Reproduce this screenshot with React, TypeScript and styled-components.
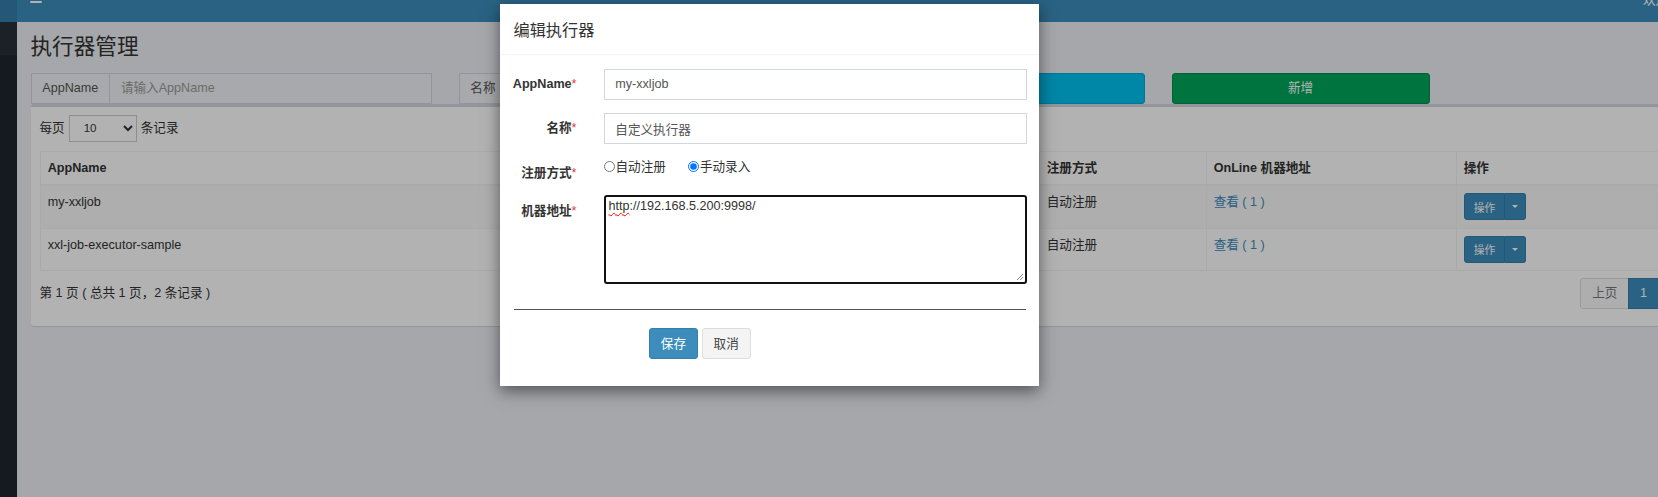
import React from "react";
import styled, { createGlobalStyle } from "styled-components";

const GlobalStyle = createGlobalStyle`
  html, body {
    margin: 0;
    padding: 0;
  }
  body {
    font-family: "Liberation Sans", "Noto Sans CJK SC", sans-serif;
    font-size: 12.6px;
    line-height: 18px;
    color: #333;
    background: #ecf0f5;
    overflow: hidden;
  }
  * {
    box-sizing: border-box;
  }
`;

const Page = styled.div`
  position: relative;
  display: flex;
  width: 1658px;
  height: 497px;
  overflow: hidden;
  background: #ecf0f5;
`;

const Sidebar = styled.aside`
  flex: none;
  width: 17px;
  display: flex;
  flex-direction: column;
  background: #1e282e;
`;

const SidebarLogo = styled.div`
  height: 22px;
  background: #367fa9;
`;

const SidebarPanel = styled.div`
  height: 33px;
  background: #283238;
`;

const Main = styled.div`
  flex: none;
  width: 1712px;
  display: flex;
  flex-direction: column;
`;

const TopBar = styled.header`
  height: 22px;
  display: flex;
  align-items: flex-end;
  justify-content: space-between;
  padding: 0 23px 0 13px;
  background: #3c8dbc;
  color: #fff;
  overflow: hidden;
`;

const Hamburger = styled.span`
  display: flex;
  flex-direction: column;
  gap: 2.7px;
  width: 12px;
  margin-bottom: 19px;

  & > i {
    display: block;
    height: 2px;
    border-radius: 1px;
    background: #fff;
  }
`;

const UserName = styled.span`
  margin-bottom: 13.5px;
  white-space: nowrap;
`;

const Content = styled.section`
  padding: 13px 13.5px 0;
`;

const PageTitle = styled.h1`
  margin: 0 0 14px;
  font-size: 21.6px;
  line-height: 1.1;
  font-weight: 400;
  color: #333;
`;

const SearchRow = styled.div`
  display: grid;
  grid-template-columns: 401px 401px 258px 258px;
  column-gap: 27px;
  height: 31px;
`;

const InputGroup = styled.div`
  display: flex;
  height: 31px;
`;

const Addon = styled.span`
  display: flex;
  align-items: center;
  padding: 0 10.8px;
  border: 1px solid #d2d6de;
  background: #f1f3f6;
  color: #555;
  white-space: nowrap;
`;

const SearchInput = styled.input`
  flex: 1;
  min-width: 0;
  padding: 0 10.8px;
  border: 1px solid #d2d6de;
  border-left: 0;
  background: #f1f3f6;
  font: inherit;
  color: #555;
  outline: none;

  &::placeholder {
    color: #999;
  }
`;

const ActionButton = styled.button<{ $variant: "info" | "success" }>`
  height: 31px;
  border: 1px solid ${(p) => (p.$variant === "info" ? "#00acd6" : "#008d4c")};
  border-radius: 3px;
  background: ${(p) => (p.$variant === "info" ? "#00c0ef" : "#00a65a")};
  color: #fff;
  font: inherit;
`;

const Box = styled.div`
  background: #fff;
  border-top: 3px solid #d2d6de;
  border-radius: 3px;
  box-shadow: 0 1px 1px rgba(0, 0, 0, 0.1);
  padding: 8px 9px 9px;
`;

const LengthRow = styled.div`
  display: flex;
  align-items: center;
  gap: 4px;
  height: 27px;
  margin-bottom: 9px;
`;

const PageSizeSelect = styled.select`
  width: 68px;
  height: 27px;
  padding: 0 0 0 10px;
  border: 1px solid #ccc;
  background: #fff;
  font-family: inherit;
  font-size: 11.5px;
  color: #333;
`;

const Table = styled.table`
  width: 100%;
  table-layout: fixed;
  border-collapse: collapse;
  border: 1px solid #f4f4f4;
`;

const Th = styled.th`
  padding: 7.2px;
  border: 1px solid #f4f4f4;
  border-bottom-width: 2px;
  text-align: left;
  font-weight: 700;
  line-height: 18px;
`;

const Tr = styled.tr<{ $striped?: boolean }>`
  background: ${(p) => (p.$striped ? "#f9f9f9" : "#fff")};
`;

const Td = styled.td`
  padding: 7.2px;
  border: 1px solid #f4f4f4;
  vertical-align: top;
  line-height: 18px;
`;

const Link = styled.a`
  color: #3c8dbc;
  text-decoration: none;
`;

const SplitButton = styled.div`
  display: inline-flex;
  height: 27px;
`;

const SplitPart = styled.button<{ $caret?: boolean }>`
  display: flex;
  align-items: center;
  padding: 0 ${(p) => (p.$caret ? "7px" : "9px")};
  border: 1px solid #367fa9;
  border-left-width: ${(p) => (p.$caret ? "0" : "1px")};
  border-radius: ${(p) => (p.$caret ? "0 3px 3px 0" : "3px 0 0 3px")};
  background: #3c8dbc;
  color: #fff;
  font-family: inherit;
  font-size: 10.8px;
`;

const Caret = styled.span`
  width: 0;
  height: 0;
  border-top: 3.6px solid #fff;
  border-left: 3.6px solid transparent;
  border-right: 3.6px solid transparent;
`;

const FooterRow = styled.div`
  display: flex;
  align-items: center;
  justify-content: space-between;
  margin: 7px 0 8px;
`;

const Pagination = styled.div`
  display: flex;
`;

const PageItem = styled.span<{ $active?: boolean; $pos?: "first" | "last" }>`
  padding: 5.4px 10.8px;
  margin-left: ${(p) => (p.$pos === "first" ? "0" : "-1px")};
  border: 1px solid ${(p) => (p.$active ? "#367fa9" : "#ddd")};
  border-radius: ${(p) =>
    p.$pos === "first" ? "3px 0 0 3px" : p.$pos === "last" ? "0 3px 3px 0" : "0"};
  background: ${(p) => (p.$active ? "#3c8dbc" : "#fafafa")};
  color: ${(p) => (p.$active ? "#fff" : "#777")};
  line-height: 18px;
`;

const Backdrop = styled.div`
  position: absolute;
  inset: 0;
  z-index: 10;
  background: rgba(0, 0, 0, 0.3);
`;

const Modal = styled.div`
  position: absolute;
  left: 500px;
  top: 4px;
  z-index: 11;
  width: 539px;
  background: #fff;
  box-shadow: 0 5px 15px rgba(0, 0, 0, 0.5);
`;

const ModalHeader = styled.div`
  padding: 15px 13.5px 12px;
  border-bottom: 1px solid #f4f4f4;
`;

const ModalTitle = styled.h4`
  margin: 0;
  font-size: 16.2px;
  line-height: 23px;
  font-weight: 400;
  color: #333;
`;

const ModalBody = styled.div`
  padding: 13.5px 13.5px 14px;
`;

const FormRow = styled.div`
  display: grid;
  grid-template-columns: 63px 423px;
  column-gap: 27px;
  align-items: start;
  margin-bottom: 13.5px;
`;

const FieldLabel = styled.label`
  display: flex;
  justify-content: flex-end;
  padding-top: 6.3px;
  font-weight: 700;
  white-space: nowrap;
  color: #333;
`;

const Star = styled.span`
  color: #e4393c;
  font-weight: 400;
`;

const TextInput = styled.input`
  width: 100%;
  height: 31px;
  padding: 0 10.8px;
  border: 1px solid #d2d6de;
  font: inherit;
  color: #555;
  outline: none;
`;

const RadioGroup = styled.div`
  display: flex;
  align-items: center;
  height: 18px;
`;

const RadioLabel = styled.label`
  display: inline-flex;
  align-items: center;
  margin-right: 22px;
  color: #333;
`;

const RadioInput = styled.input`
  width: 11px;
  height: 11px;
  margin: 0 1px 0 0;
`;

const AddressBox = styled.div`
  position: relative;
  height: 89px;
  padding: 0 3px;
  border: 2px solid #111;
  border-radius: 3px;
  color: #333;
  line-height: 18px;
`;

const Misspelled = styled.span`
  text-decoration: underline wavy #f00;
  text-decoration-thickness: 1px;
  text-decoration-skip-ink: none;
  text-underline-offset: 2px;
`;

const Grip = styled.svg`
  position: absolute;
  right: 1px;
  bottom: 1px;
`;

const Divider = styled.hr`
  height: 1px;
  margin: 25px 0 18px;
  border: 0;
  background: #555;
`;

const ButtonRow = styled.div`
  display: flex;
  gap: 4px;
  padding-left: 135.5px;
  margin-bottom: 13.5px;
`;

const ModalButton = styled.button<{ $primary?: boolean }>`
  height: 30.6px;
  padding: 0 10.8px;
  border: 1px solid ${(p) => (p.$primary ? "#367fa9" : "#ddd")};
  border-radius: 3px;
  background: ${(p) => (p.$primary ? "#3c8dbc" : "#f4f4f4")};
  color: ${(p) => (p.$primary ? "#fff" : "#444")};
  font: inherit;
`;

const rows = [
  { app: "my-xxljob", title: "自定义执行器", type: "自动注册", online: 1 },
  { app: "xxl-job-executor-sample", title: "示例执行器", type: "自动注册", online: 1 },
];

export default function App() {
  return (
    <>
      <GlobalStyle />
      <Page>
        <Sidebar>
          <SidebarLogo />
          <SidebarPanel />
        </Sidebar>
        <Main>
          <TopBar>
            <Hamburger>
              <i />
              <i />
              <i />
            </Hamburger>
            <UserName>欢迎 admin</UserName>
          </TopBar>
          <Content>
            <PageTitle>执行器管理</PageTitle>
            <SearchRow>
              <InputGroup>
                <Addon>AppName</Addon>
                <SearchInput placeholder="请输入AppName" />
              </InputGroup>
              <InputGroup>
                <Addon>名称</Addon>
                <SearchInput placeholder="请输入名称" />
              </InputGroup>
              <ActionButton $variant="info">搜索</ActionButton>
              <ActionButton $variant="success">新增</ActionButton>
            </SearchRow>
            <Box>
              <LengthRow>
                <span>每页</span>
                <PageSizeSelect defaultValue="10">
                  <option value="10">10</option>
                  <option value="25">25</option>
                  <option value="50">50</option>
                </PageSizeSelect>
                <span>条记录</span>
              </LengthRow>
              <Table>
                <colgroup>
                  <col style={{ width: 520 }} />
                  <col style={{ width: 479 }} />
                  <col style={{ width: 167 }} />
                  <col style={{ width: 250 }} />
                  <col />
                </colgroup>
                <thead>
                  <tr>
                    <Th>AppName</Th>
                    <Th>名称</Th>
                    <Th>注册方式</Th>
                    <Th>OnLine 机器地址</Th>
                    <Th>操作</Th>
                  </tr>
                </thead>
                <tbody>
                  {rows.map((r, i) => (
                    <Tr key={r.app} $striped={i % 2 === 0}>
                      <Td>{r.app}</Td>
                      <Td>{r.title}</Td>
                      <Td>{r.type}</Td>
                      <Td>
                        <Link href="#">查看 ( {r.online} )</Link>
                      </Td>
                      <Td>
                        <SplitButton>
                          <SplitPart>操作</SplitPart>
                          <SplitPart $caret>
                            <Caret />
                          </SplitPart>
                        </SplitButton>
                      </Td>
                    </Tr>
                  ))}
                </tbody>
              </Table>
              <FooterRow>
                <span>第 1 页 ( 总共 1 页，2 条记录 )</span>
                <Pagination>
                  <PageItem $pos="first">上页</PageItem>
                  <PageItem $active>1</PageItem>
                  <PageItem $pos="last">下页</PageItem>
                </Pagination>
              </FooterRow>
            </Box>
          </Content>
        </Main>

        <Backdrop />
        <Modal>
          <ModalHeader>
            <ModalTitle>编辑执行器</ModalTitle>
          </ModalHeader>
          <ModalBody>
            <FormRow>
              <FieldLabel>
                AppName<Star>*</Star>
              </FieldLabel>
              <TextInput defaultValue="my-xxljob" />
            </FormRow>
            <FormRow>
              <FieldLabel>
                名称<Star>*</Star>
              </FieldLabel>
              <TextInput defaultValue="自定义执行器" />
            </FormRow>
            <FormRow>
              <FieldLabel>
                注册方式<Star>*</Star>
              </FieldLabel>
              <RadioGroup>
                <RadioLabel>
                  <RadioInput type="radio" name="addressType" />
                  自动注册
                </RadioLabel>
                <RadioLabel>
                  <RadioInput type="radio" name="addressType" defaultChecked />
                  手动录入
                </RadioLabel>
              </RadioGroup>
            </FormRow>
            <FormRow>
              <FieldLabel>
                机器地址<Star>*</Star>
              </FieldLabel>
              <AddressBox>
                <Misspelled>http</Misspelled>://192.168.5.200:9998/
                <Grip width="8" height="8" viewBox="0 0 8 8">
                  <path d="M1 7 L7 1 M4 7 L7 4" stroke="#888" strokeWidth="1" />
                </Grip>
              </AddressBox>
            </FormRow>
            <Divider />
            <ButtonRow>
              <ModalButton $primary>保存</ModalButton>
              <ModalButton>取消</ModalButton>
            </ButtonRow>
          </ModalBody>
        </Modal>
      </Page>
    </>
  );
}
